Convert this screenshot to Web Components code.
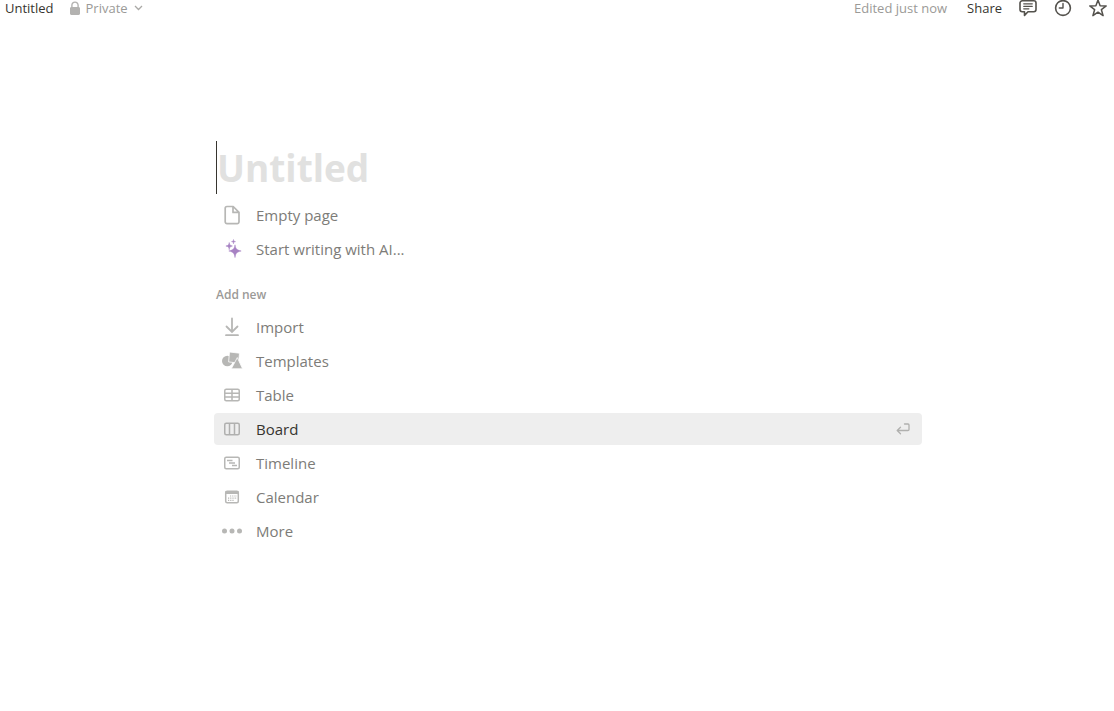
<!DOCTYPE html>
<html lang="en">
<head>
<meta charset="utf-8">
<title>Untitled</title>
<style>
  body { margin: 0; background: #fff; color: #37352f; font-family: "Open Sans", "Noto Sans", sans-serif; }
</style>
</head>
<body>
<note-app></note-app>
<script>
const ICONS = {
  lock: '<svg width="10" height="14" viewBox="0 0 10 14"><path fill="#b3b2b0" d="M1.2 6V4.2C1.2 1.9 2.8.4 5 .4s3.800 1.500 3.800 3.800V6c.7.1 1.200.6 1.200 1.400v5.200c0 .9-.5 1.400-1.400 1.400H1.400C.5 14 0 13.500 0 12.600V7.400C0 6.600.5 6.100 1.200 6zm1.400 0h4.800V4.100C7.400 2.600 6.400 1.700 5 1.700s-2.400.9-2.400 2.400z"/></svg>',
  chevron: '<svg width="9" height="6" viewBox="0 0 9 6"><path fill="none" stroke="#aaa9a6" stroke-width="1.300" d="M1 1l3.500 3.500L8 1"/></svg>',
  comment: '<svg width="20" height="20" viewBox="0 0 20 20"><g fill="none" stroke="#54524d" stroke-width="1.600" stroke-linejoin="round" stroke-linecap="round"><path d="M4.200 2.800h11.600a2.200 2.200 0 0 1 2.200 2.200v6.600a2.200 2.200 0 0 1-2.200 2.200H10L6.500 17.400v-3.600H4.200A2.200 2.200 0 0 1 2 11.600V5a2.200 2.200 0 0 1 2.200-2.200z"/><path stroke-width="1.200" d="M5.700 5.800h8.600M5.700 8.300h8.600M5.700 10.800h5.200"/></g></svg>',
  clock: '<svg width="20" height="20" viewBox="0 0 20 20"><g fill="none" stroke="#54524d" stroke-width="1.600" stroke-linecap="round" stroke-linejoin="round"><circle cx="10" cy="10" r="7.400"/><path stroke-width="1.400" d="M10 5.500V10H6.300"/></g></svg>',
  star: '<svg width="20" height="20" viewBox="0 0 20 20"><path fill="none" stroke="#54524d" stroke-width="1.500" stroke-linejoin="round" d="M10 2l2.100 5.700 6.100.2-4.800 3.800 1.700 5.900-5.100-3.400-5.100 3.400 1.700-5.900-4.800-3.800 6.100-.2z"/></svg>',
  page: '<svg width="24" height="24" viewBox="0 0 24 24"><path fill="none" stroke="#b7b7b5" stroke-width="1.700" stroke-linejoin="round" d="M7 3.500h6.200l5.800 5.800v9.500a1.800 1.800 0 0 1-1.800 1.800H7a1.800 1.800 0 0 1-1.800-1.800V5.300A1.800 1.800 0 0 1 7 3.500zM13 3.700v5.700h5.700"/></svg>',
  ai: '<svg width="24" height="24" viewBox="0 0 24 24"><g fill="#a782c3" stroke="#a782c3" stroke-width=".5" stroke-linejoin="round"><path d="M15 7.800c.7 4.200 1.600 5.100 6.200 6.200-4.600 1.100-5.500 2.100-6.200 6.600-.7-4.500-1.600-5.500-6.200-6.600 4.600-1.100 5.500-2 6.200-6.200z"/><path d="M9.200 5.500c.3 2.500.9 3 3.200 3.500-2.300.5-2.900 1.100-3.200 3.700C8.900 10.100 8.300 9.500 5.900 9c2.400-.5 3-1 3.300-3.500z"/><path d="M13.500 2.500c.2 1.500.5 1.800 2 2.100-1.500.3-1.800.6-2 2.200-.2-1.600-.5-1.900-2-2.200 1.500-.3 1.800-.6 2-2.100z"/></g></svg>',
  import: '<svg width="24" height="24" viewBox="0 0 24 24"><path fill="none" stroke="#b7b7b5" stroke-width="1.800" stroke-linecap="round" d="M12 3.500v13M6.500 11.500l5.500 5.500 5.500-5.500M6 20.200h12"/></svg>',
  templates: '<svg width="24" height="24" viewBox="0 0 24 24"><circle cx="7.300" cy="12" r="5.300" fill="#b7b7b5"/><path fill="#b7b7b5" stroke="#fff" stroke-width=".8" d="M9.500 3l10 1.200-1 9.900-9.900-1.200z"/><path fill="#b7b7b5" stroke="#fff" stroke-width=".8" stroke-linejoin="round" d="M17.300 8.600l5.300 11.200H11.300z"/></svg>',
  table: '<svg width="24" height="24" viewBox="0 0 24 24"><g fill="none" stroke="#b7b7b5" stroke-width="1.500"><rect x="4.750" y="6.300" width="14.500" height="11.500" rx="1.500"/><path d="M5 10.200h14M5 14h14M12 6.500v11"/></g></svg>',
  board: '<svg width="24" height="24" viewBox="0 0 24 24"><g fill="none" stroke="#b0b0af" stroke-width="1.500"><rect x="4.750" y="6.300" width="14.500" height="11.500" rx="1.500"/><path d="M9.500 6.500v11M14.500 6.500v11"/></g></svg>',
  timeline: '<svg width="24" height="24" viewBox="0 0 24 24"><g fill="none" stroke="#b7b7b5" stroke-width="1.500"><rect x="4.750" y="6.300" width="14.500" height="11.500" rx="1.500"/><path stroke-width="1.300" d="M7 9.500h5.500M9 12h6M12 14.500h5"/></g></svg>',
  calendar: '<svg width="24" height="24" viewBox="0 0 24 24"><rect x="5.700" y="6.200" width="12.600" height="11.600" rx="1.500" fill="none" stroke="#b7b7b5" stroke-width="1.500"/><path fill="#b7b7b5" d="M5.500 6h13v3h-13z"/><path fill="none" stroke="#b7b7b5" stroke-width="1.200" stroke-dasharray="1.200 1" d="M10 11h7M8 13.200h9M8 15.400h6.500"/></svg>',
  more: '<svg width="24" height="24" viewBox="0 0 24 24"><g fill="#b7b7b5"><circle cx="4.500" cy="12" r="2.500"/><circle cx="12" cy="12" r="2.500"/><circle cx="19.500" cy="12" r="2.500"/></g></svg>',
  enter: '<svg width="14" height="12" viewBox="0 0 14 12"><path fill="none" stroke="#b0b0ae" stroke-width="1.300" stroke-linecap="round" stroke-linejoin="round" d="M8.500 1H12a1 1 0 0 1 1 1v4.500a1 1 0 0 1-1 1H1.500M4.500 4.300L1.200 7.500l3.300 3.300"/></svg>'
};

function define(name, render) {
  customElements.define(name, class extends HTMLElement {
    connectedCallback() {
      if (this.shadowRoot) return;
      this.attachShadow({ mode: "open" }).innerHTML = render(this);
    }
  });
}

define("note-icon", el => `
  <style>:host { display: inline-flex; flex: none; } svg { display: block; }</style>
  ${ICONS[el.getAttribute("name")]}`);

define("top-button", el => `
  <style>
    :host { display: flex; flex: none; }
    button { display: flex; align-items: center; gap: 6px; padding: 0; border: 0; background: none;
      font: inherit; color: inherit; line-height: 16px; cursor: pointer; white-space: nowrap; }
  </style>
  <button type="button" ${el.hasAttribute("label") ? `aria-label="${el.getAttribute("label")}"` : ""}><slot></slot></button>`);

define("top-bar", () => `
  <style>
    :host { display: block; }
    header { display: flex; align-items: center; justify-content: space-between; height: 16px; padding: 0 6px 0 5px; font-size: 13px; line-height: 16px; }
    .left, .right { display: flex; align-items: center; }
    .left { gap: 16px; }
    .right { gap: 15px; }
    .muted { color: #9b9a97; }
    .state { display: flex; align-items: center; gap: 20px; margin-right: 1px; }
  </style>
  <header>
    <div class="left">
      <top-button>Untitled</top-button>
      <top-button class="muted"><note-icon name="lock"></note-icon><span>Private</span><note-icon name="chevron"></note-icon></top-button>
    </div>
    <div class="right">
      <div class="state"><span class="muted">Edited just now</span><top-button>Share</top-button></div>
      <top-button label="Comments"><note-icon name="comment"></note-icon></top-button>
      <top-button label="Updates"><note-icon name="clock"></note-icon></top-button>
      <top-button label="Favorite"><note-icon name="star"></note-icon></top-button>
    </div>
  </header>`);

define("page-title", () => `
  <style>
    :host { display: block; padding: 0 2px; }
    input { display: block; box-sizing: border-box; width: 100%; height: 53px; margin: 0; padding: 0;
      border: 0; border-left: 1px solid #37352f; outline: 0; background: none;
      font: 700 37px/52px "Open Sans", "Noto Sans", sans-serif; color: #37352f; }
    input::placeholder { color: #e1e1e0; opacity: 1; }
  </style>
  <input type="text" placeholder="Untitled" aria-label="Page title">`);

define("menu-item", el => `
  <style>
    :host { display: block; }
    button { display: flex; align-items: center; gap: 12px; box-sizing: border-box; width: 100%; height: 32px;
      padding: 0 12px 0 6px; border: 0; border-radius: 4px; background: none; font: inherit; font-size: 15px;
      line-height: 24px; color: #7d7c78; text-align: left; cursor: pointer; }
    :host([selected]) button { background: #eee; color: #37352f; }
    .label { flex: 1; }
  </style>
  <button type="button"><note-icon name="${el.getAttribute("icon")}"></note-icon><span class="label"><slot></slot></span>${el.hasAttribute("selected") ? '<note-icon name="enter"></note-icon>' : ""}</button>`);

define("menu-group", el => `
  <style>
    :host { display: flex; flex-direction: column; gap: 2px; }
    h2 { margin: 0; padding: 0 2px 4px; font-size: 12px; line-height: 20px; font-weight: 600; color: #9b9a97; }
  </style>
  ${el.hasAttribute("heading") ? `<h2>${el.getAttribute("heading")}</h2>` : ""}<slot></slot>`);

define("note-app", () => `
  <style>
    :host { display: block; }
    main { display: flex; flex-direction: column; padding: 125px 192px 40px 214px; }
    page-title { margin-bottom: 5px; }
    menu-group + menu-group { margin-top: 20px; }
  </style>
  <top-bar></top-bar>
  <main>
    <page-title></page-title>
    <menu-group>
      <menu-item icon="page">Empty page</menu-item>
      <menu-item icon="ai">Start writing with AI...</menu-item>
    </menu-group>
    <menu-group heading="Add new">
      <menu-item icon="import">Import</menu-item>
      <menu-item icon="templates">Templates</menu-item>
      <menu-item icon="table">Table</menu-item>
      <menu-item icon="board" selected>Board</menu-item>
      <menu-item icon="timeline">Timeline</menu-item>
      <menu-item icon="calendar">Calendar</menu-item>
      <menu-item icon="more">More</menu-item>
    </menu-group>
  </main>`);
</script>
</body>
</html>
